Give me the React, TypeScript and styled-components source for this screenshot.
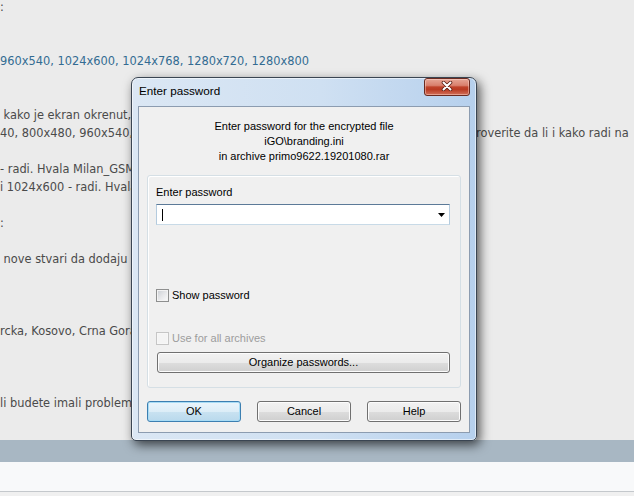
import React from "react";
import styled, { createGlobalStyle } from "styled-components";

const GlobalStyle = createGlobalStyle`
  html, body { margin: 0; padding: 0; background: #ebebeb; overflow: hidden; }
  #root { width: 634px; height: 496px; }
`;

const Page = styled.div`
  width: 634px;
  height: 496px;
  display: flex;
  flex-direction: column;
  overflow: hidden;
  background: #ebebeb;
`;

const Content = styled.div`
  position: relative;
  height: 440px;
  flex: none;
`;

const Lines = styled.div`
  margin-top: -2px;
  font-family: "DejaVu Sans", Verdana, sans-serif;
  font-size: 11.4px;
  color: #4a4a4a;
  white-space: nowrap;
`;

const Line = styled.div<{ $blue?: boolean }>`
  height: 18px;
  line-height: 18px;
  color: ${(p) => (p.$blue ? "#336b92" : "#4a4a4a")};
`;

const Band = styled.div`
  height: 22px;
  flex: none;
  background: #a8b7c3;
`;

const Footer = styled.div`
  height: 29px;
  flex: none;
  background: #f8f9fa;
  border-bottom: 1px solid #c4c8cc;
`;

const Rest = styled.div`
  flex: 1;
  background: #f0f0f0;
`;

/* ---------- dialog ---------- */

const Dialog = styled.div`
  position: absolute;
  z-index: 2;
  left: 131px;
  top: 77px;
  width: 346px;
  height: 364px;
  box-sizing: border-box;
  border: 1px solid #3a4552;
  border-radius: 7px 7px 5px 5px;
  background: linear-gradient(to right, #dbe7f4 0%, #cfe0f2 55%, #b6d0ed 100%);
  box-shadow: 3px 4px 11px rgba(0, 0, 0, 0.65), inset 0 0 0 1px rgba(255, 255, 255, 0.55);
  display: flex;
  flex-direction: column;
  padding: 0 6px 7px 6px;
  font-family: "Liberation Sans", Arial, sans-serif;
  font-size: 11px;
  color: #000;
`;

const TitleBar = styled.div`
  height: 28px;
  flex: none;
  display: flex;
  align-items: flex-start;
  justify-content: space-between;
`;

const Title = styled.div`
  padding: 6px 0 0 1px;
  line-height: 13px;
  font-size: 11.7px;
  color: #000;
`;

const CloseButton = styled.div`
  width: 46px;
  height: 18px;
  box-sizing: border-box;
  border: 1px solid #6a2a20;
  border-radius: 3px;
  background: linear-gradient(
    to bottom,
    #e6a595 0%,
    #d9806d 40%,
    #c0432b 50%,
    #b93a22 65%,
    #d2705a 100%
  );
  box-shadow: inset 0 0 0 1px rgba(255, 220, 210, 0.45);
  display: flex;
  align-items: center;
  justify-content: center;
  padding-bottom: 2px;
`;

const Client = styled.div`
  flex: 1;
  border: 1px solid #8c9cb0;
  background: #f0f0f0;
  display: flex;
  flex-direction: column;
`;

const Info = styled.div`
  padding-top: 12px;
  line-height: 15px;
  text-align: center;
`;

const Group = styled.div`
  margin: 11px 8px 0 8px;
  height: 213px;
  box-sizing: border-box;
  border: 1px solid #d5dfe5;
  border-radius: 3px;
  box-shadow: inset 1px 1px 0 #ffffff;
  display: flex;
  flex-direction: column;
  padding: 10px 10px 14px 8px;
`;

const Label = styled.div`
  line-height: 13px;
  height: 13px;
`;

const Combo = styled.div`
  margin-top: 5px;
  height: 21px;
  box-sizing: border-box;
  background: #fff;
  border: 1px solid;
  border-color: #5c7a98 #b4cbde #c8dae7 #b4cbde;
  display: flex;
  align-items: center;
  justify-content: space-between;
  padding: 0 4px 0 5px;
`;

const Caret = styled.div`
  width: 1px;
  height: 12px;
  background: #000;
`;

const CheckRow = styled.div<{ $gap: number; $disabled?: boolean }>`
  margin-top: ${(p) => p.$gap}px;
  height: 13px;
  display: flex;
  align-items: center;
  gap: 3px;
  line-height: 13px;
  color: ${(p) => (p.$disabled ? "#9d9d9d" : "#000")};
`;

const Box = styled.div<{ $disabled?: boolean }>`
  width: 13px;
  height: 13px;
  box-sizing: border-box;
  border: 1px solid ${(p) => (p.$disabled ? "#c6c6c6" : "#8e8f8f")};
  background: ${(p) =>
    p.$disabled
      ? "#f4f4f4"
      : "linear-gradient(135deg, #c9cdd3 0%, #e6e7e9 50%, #fbfbfb 100%)"};
  box-shadow: inset 0 0 0 1px ${(p) => (p.$disabled ? "#f7f7f7" : "#f3f3f3")};
`;

const Button = styled.div<{ $default?: boolean }>`
  height: 21px;
  box-sizing: border-box;
  border: 1px solid ${(p) => (p.$default ? "#3c7fb1" : "#707070")};
  border-radius: 3px;
  background: ${(p) =>
    p.$default
      ? "linear-gradient(to bottom, #eaf5fc 0%, #dcedf7 50%, #c9e2f1 51%, #b9d9ec 100%)"
      : "linear-gradient(to bottom, #f2f2f2 0%, #ebebeb 50%, #dddddd 51%, #cfcfcf 100%)"};
  box-shadow: inset 0 0 0 1px ${(p) => (p.$default ? "#a8dcf5" : "#fcfcfc")};
  display: flex;
  align-items: center;
  justify-content: center;
  line-height: 13px;
  color: #000;
`;

const OrganizeButton = styled(Button)`
  margin: 7px 0 0 1px;
`;

const ButtonRow = styled.div`
  margin: 13px 8px 0 8px;
  display: flex;
  justify-content: space-between;
  & > ${Button} {
    width: 94px;
  }
`;

const CloseGlyph = () => (
  <svg width="12" height="10" viewBox="0 0 12 10">
    <path d="M2.5 1.5 L9.5 8.5 M9.5 1.5 L2.5 8.5" stroke="#5b1f15" strokeWidth="3.6" strokeLinecap="round" fill="none" />
    <path d="M2.5 1.5 L9.5 8.5 M9.5 1.5 L2.5 8.5" stroke="#ffffff" strokeWidth="2" strokeLinecap="round" fill="none" />
  </svg>
);

const DropArrow = () => (
  <svg width="7" height="4" viewBox="0 0 7 4">
    <path d="M0 0 H7 L3.5 4 Z" fill="#000" />
  </svg>
);

export default function App() {
  return (
    <>
      <GlobalStyle />
      <Page>
        <Content>
          <Lines>
            <Line>:</Line>
            <Line />
            <Line />
            <Line $blue>960x540, 1024x600, 1024x768, 1280x720, 1280x800</Line>
            <Line />
            <Line />
            <Line>{"\u00a0kako je ekran okrenut, testirano na 480x272, 800x480 i 1024x600 rezolucijama."}</Line>
            <Line>40, 800x480, 960x540, 1024x600, 1024x768 i 1280x720 rezolucijama molim vas proverite da li i kako radi na</Line>
            <Line />
            <Line>- radi. Hvala Milan_GSM na testiranju.</Line>
            <Line>i 1024x600 - radi. Hvala svima na testiranju.</Line>
            <Line />
            <Line>:</Line>
            <Line />
            <Line>{"\u00a0nove stvari da dodaju u sledecoj verziji."}</Line>
            <Line />
            <Line />
            <Line />
            <Line>rcka, Kosovo, Crna Gora, Makedonija, Slovenija.</Line>
            <Line />
            <Line />
            <Line />
            <Line>li budete imali problema sa instalacijom, javite.</Line>
            <Line />
          </Lines>

          <Dialog>
            <TitleBar>
              <Title>Enter password</Title>
              <CloseButton>
                <CloseGlyph />
              </CloseButton>
            </TitleBar>
            <Client>
              <Info>
                <div>Enter password for the encrypted file</div>
                <div>iGO\branding.ini</div>
                <div>in archive primo9622.19201080.rar</div>
              </Info>
              <Group>
                <Label>Enter password</Label>
                <Combo>
                  <Caret />
                  <DropArrow />
                </Combo>
                <CheckRow $gap={64}>
                  <Box />
                  <span>Show password</span>
                </CheckRow>
                <CheckRow $gap={30} $disabled>
                  <Box $disabled />
                  <span>Use for all archives</span>
                </CheckRow>
                <OrganizeButton>Organize passwords...</OrganizeButton>
              </Group>
              <ButtonRow>
                <Button $default>OK</Button>
                <Button>Cancel</Button>
                <Button>Help</Button>
              </ButtonRow>
            </Client>
          </Dialog>
        </Content>
        <Band />
        <Footer />
        <Rest />
      </Page>
    </>
  );
}
